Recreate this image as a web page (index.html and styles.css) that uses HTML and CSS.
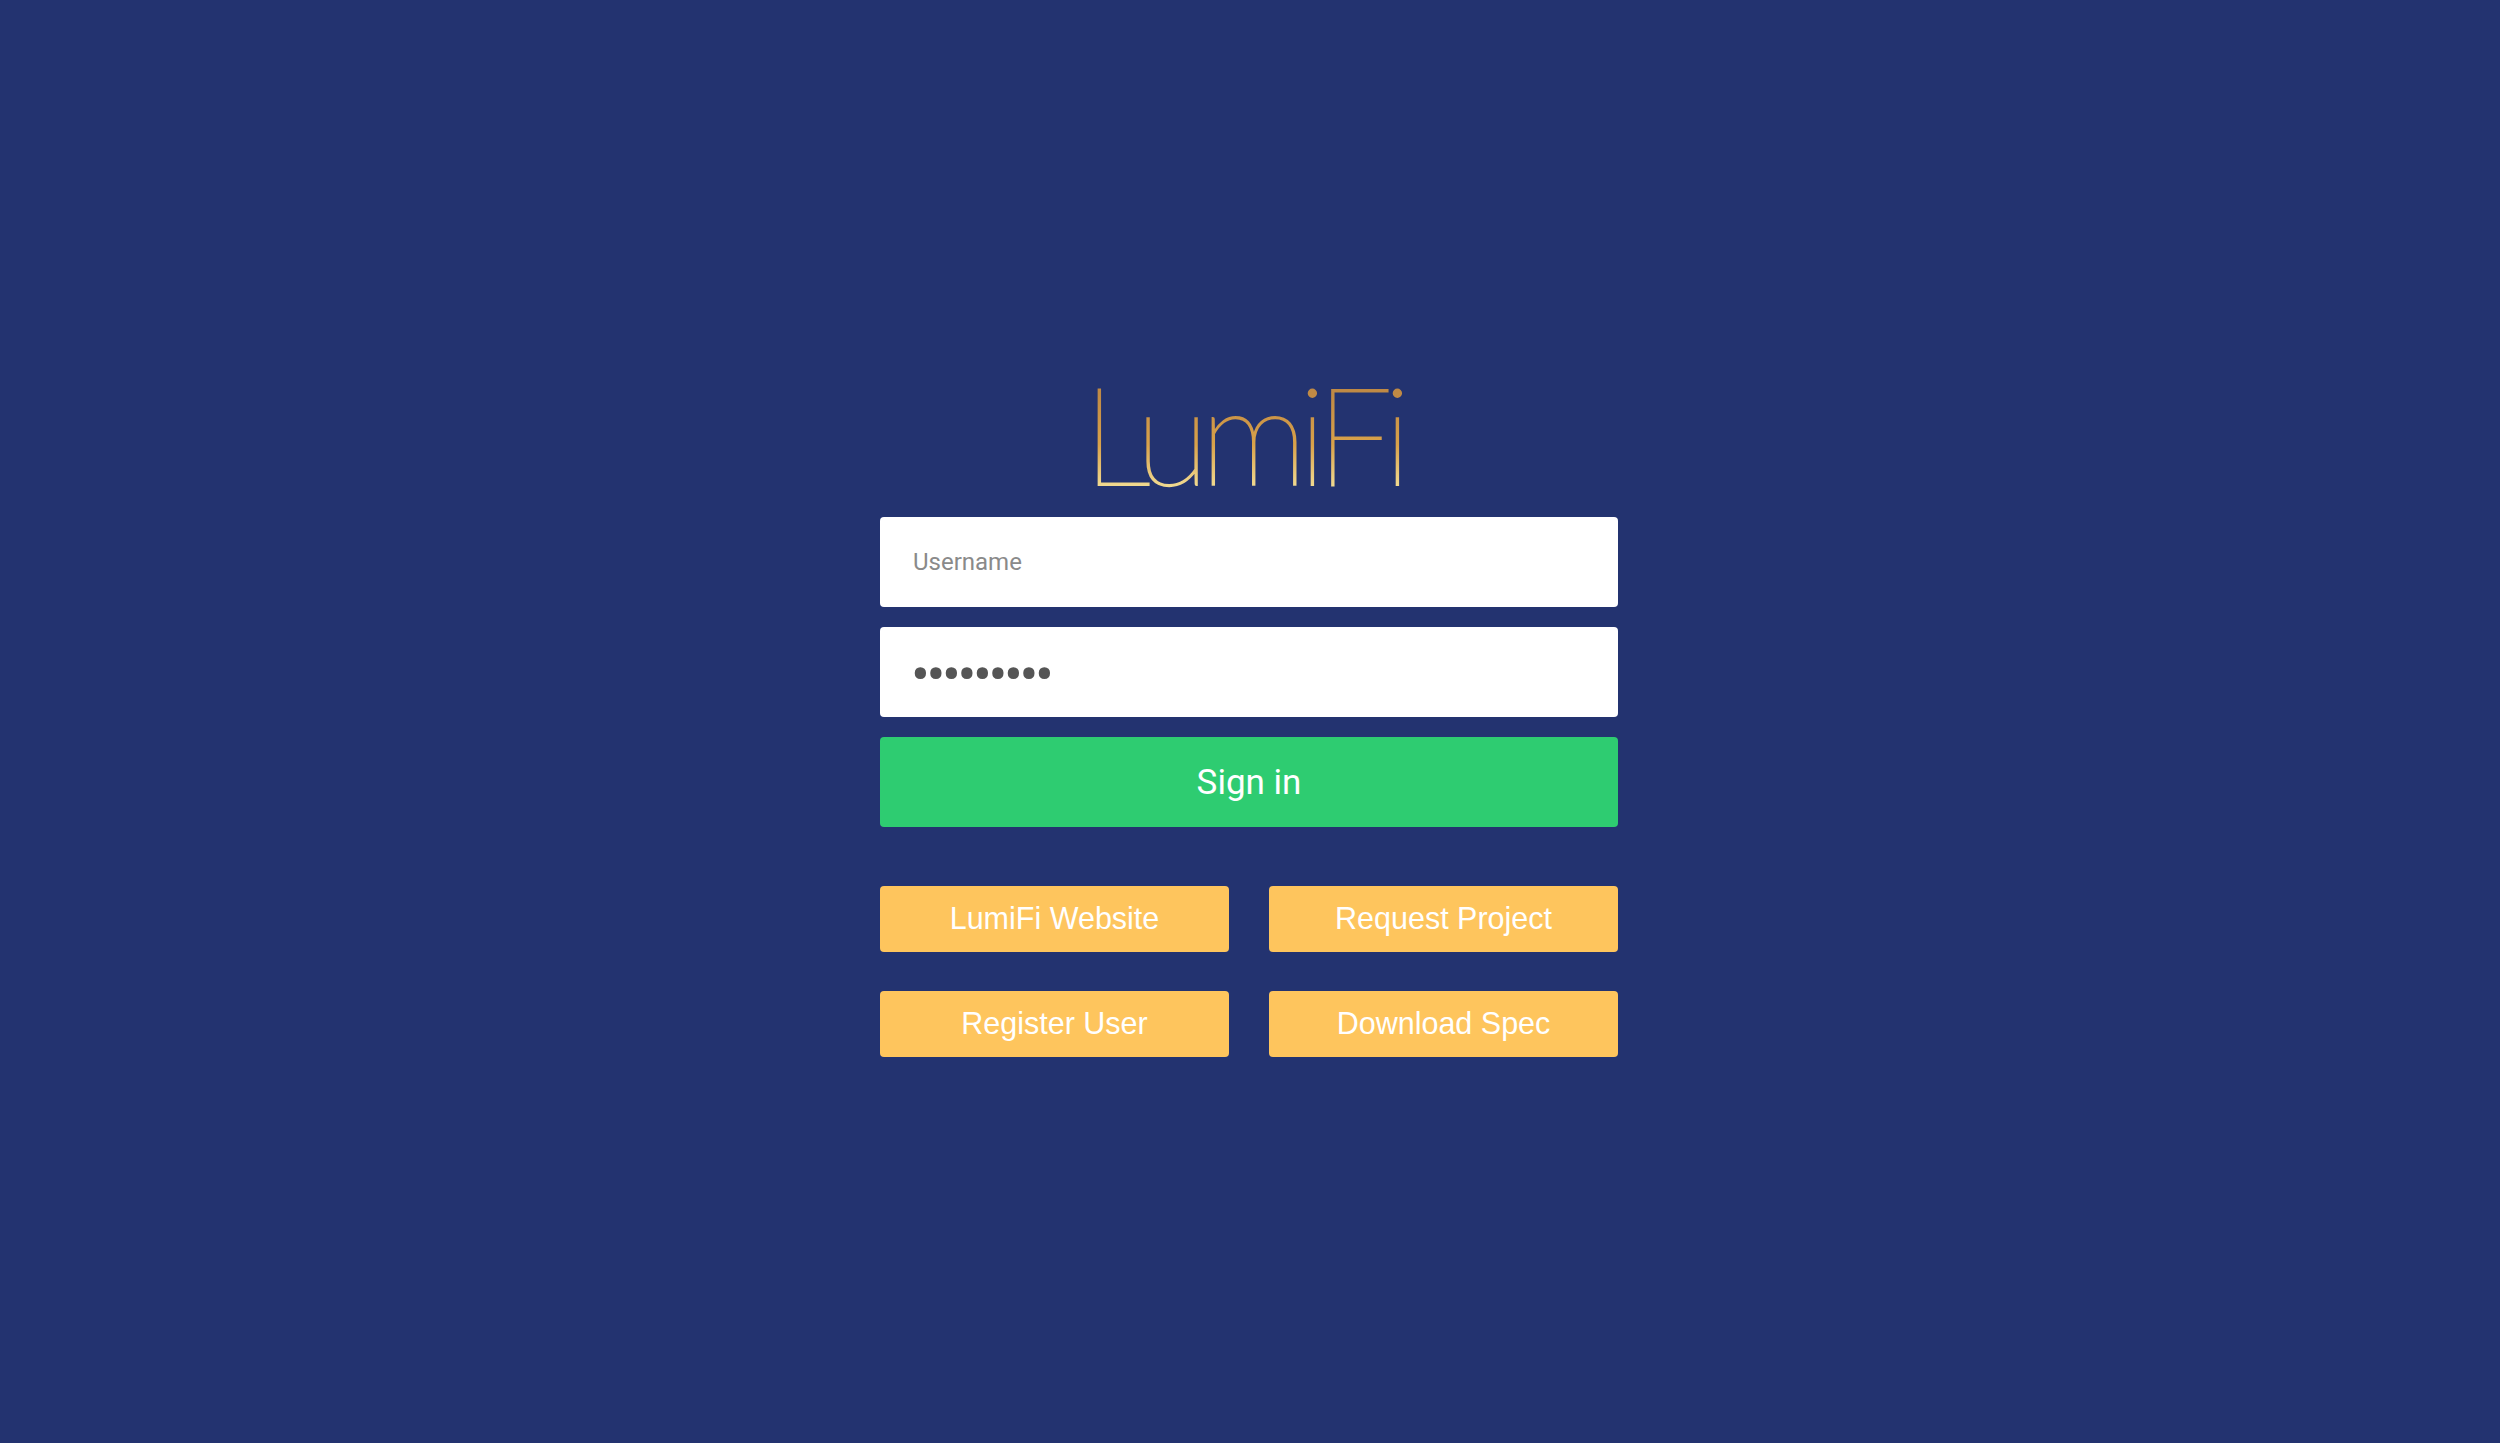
FILE: index.html
```html
<!DOCTYPE html>
<html lang="en">
<head>
<meta charset="utf-8">
<title>LumiFi</title>
<link rel="stylesheet" href="styles.css">
</head>
<body>
<main class="login">
  <h1 class="logo">LumiFi</h1>
  <form class="form">
    <input class="field" type="text" placeholder="Username">
    <input class="field field-password" type="password" value="123456789">
    <button class="signin" type="button">Sign in</button>
  </form>
  <nav class="links">
    <a class="link" href="#">LumiFi Website</a>
    <a class="link" href="#">Request Project</a>
    <a class="link" href="#">Register User</a>
    <a class="link" href="#">Download Spec</a>
  </nav>
</main>
</body>
</html>
```
FILE: styles.css
```css
* { box-sizing: border-box; }
html, body { margin: 0; height: 100%; }
body {
  background: #233370;
  font-family: Roboto, "Liberation Sans", sans-serif;
  overflow: hidden;
  padding-right: 2px;
}
.login {
  width: 738px;
  margin: 0 auto;
  padding-top: 372px;
}
.logo {
  margin: 0;
  height: 145px;
  padding-right: 13px;
  text-align: center;
  font-family: Lato, Roboto, sans-serif;
  font-weight: 100;
  font-size: 136px;
  line-height: 122px;
  letter-spacing: -9.2px;
  color: transparent;
  -webkit-text-stroke: 1.8px transparent;
  background: linear-gradient(180deg, #c08a45 15%, #d9a24a 50%, #f6e6a0 85%);
  background-clip: text;
  -webkit-background-clip: text;
}
.form { display: flex; flex-direction: column; gap: 20px; }
.field {
  height: 90px;
  width: 100%;
  border: 0;
  border-radius: 4px;
  padding: 0 33px;
  background: #fff;
  font-family: Roboto, sans-serif;
  font-size: 24px;
  color: #555;
}
.field-password { font-size: 56px; letter-spacing: -3.4px; padding: 5px 31px 0; }
.field::placeholder { color: #8a8a8a; opacity: 1; }
.signin {
  height: 90px;
  border: 0;
  border-radius: 4px;
  background: #2ecc71;
  color: #fff;
  font-family: Roboto, sans-serif;
  font-size: 35px;
}
.links {
  display: grid;
  grid-template-columns: 349px 349px;
  justify-content: space-between;
  row-gap: 39px;
  margin-top: 59px;
}
.link {
  height: 66px;
  padding-bottom: 2px;
  display: flex;
  align-items: center;
  justify-content: center;
  border-radius: 4px;
  background: #fec55d;
  color: #fff;
  text-decoration: none;
  font-family: "Liberation Sans", Arial, sans-serif;
  font-size: 30.5px;
}
```
